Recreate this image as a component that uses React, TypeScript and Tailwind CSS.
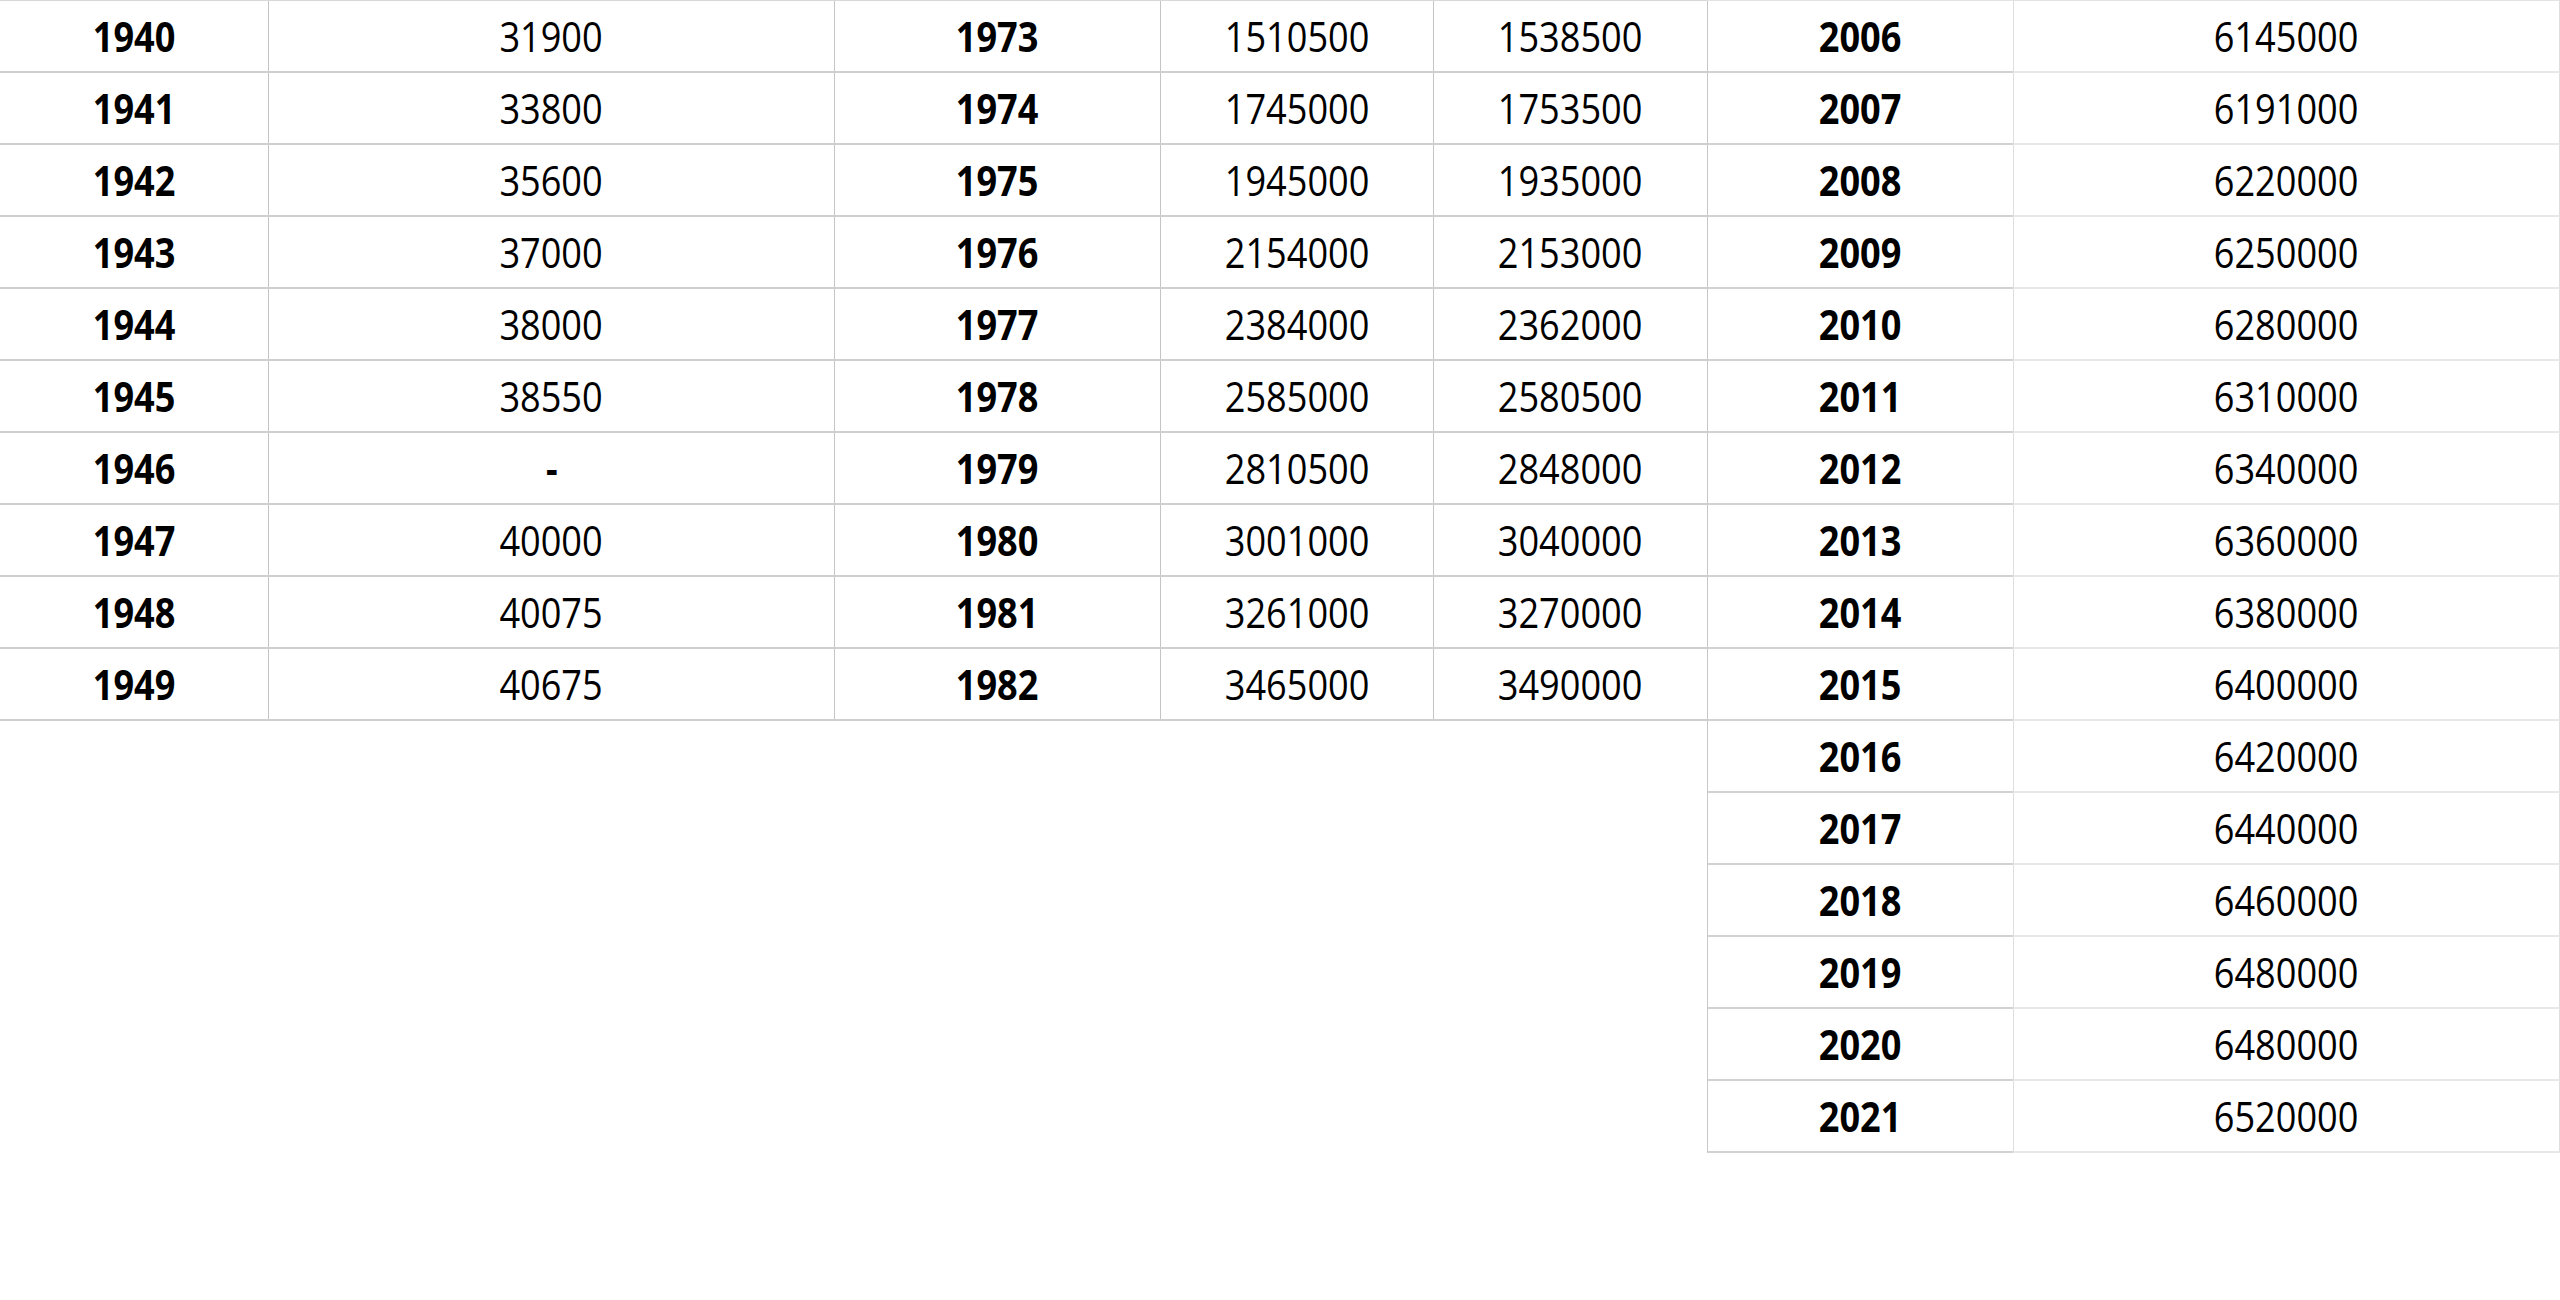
const first: [string, string][] = [
  ["1940", "31900"],
  ["1941", "33800"],
  ["1942", "35600"],
  ["1943", "37000"],
  ["1944", "38000"],
  ["1945", "38550"],
  ["1946", "-"],
  ["1947", "40000"],
  ["1948", "40075"],
  ["1949", "40675"],
];

const second: [string, string, string][] = [
  ["1973", "1510500", "1538500"],
  ["1974", "1745000", "1753500"],
  ["1975", "1945000", "1935000"],
  ["1976", "2154000", "2153000"],
  ["1977", "2384000", "2362000"],
  ["1978", "2585000", "2580500"],
  ["1979", "2810500", "2848000"],
  ["1980", "3001000", "3040000"],
  ["1981", "3261000", "3270000"],
  ["1982", "3465000", "3490000"],
];

const third: [string, string][] = [
  ["2006", "6145000"],
  ["2007", "6191000"],
  ["2008", "6220000"],
  ["2009", "6250000"],
  ["2010", "6280000"],
  ["2011", "6310000"],
  ["2012", "6340000"],
  ["2013", "6360000"],
  ["2014", "6380000"],
  ["2015", "6400000"],
  ["2016", "6420000"],
  ["2017", "6440000"],
  ["2018", "6460000"],
  ["2019", "6480000"],
  ["2020", "6480000"],
  ["2021", "6520000"],
];

// text is a bit narrower than Open Sans, so squeeze it slightly
const Txt = ({ children, bold }: { children: string; bold?: boolean }) => (
  <span className={`inline-block scale-x-[0.86] ${bold ? "font-bold" : "font-normal"}`}>{children}</span>
);

export default function App() {
  return (
    <div className="flex items-start w-[2560px] min-h-[1300px] bg-white text-black text-[42px] leading-[70px] font-['Open_Sans',sans-serif]">
      {/* table 1 */}
      <div className="w-[834px] border-t border-[#d8d8d8]">
        {first.map(([year, value]) => (
          <div key={year} className="flex h-[72px] border-b-2 border-[#cfcfcf]">
            <div className="w-[268px] flex items-center justify-center">
              <Txt bold>{year}</Txt>
            </div>
            <div className="flex-1 flex items-center justify-center border-l border-[#c4c4c4]">
              <Txt bold={value === "-"}>{value}</Txt>
            </div>
          </div>
        ))}
      </div>

      {/* table 2 */}
      <div className="w-[873px] border-t border-[#d8d8d8]">
        {second.map(([year, a, b]) => (
          <div key={year} className="flex h-[72px] border-b-2 border-[#cfcfcf]">
            <div className="w-[326px] flex items-center justify-center border-l border-[#c4c4c4]">
              <Txt bold>{year}</Txt>
            </div>
            <div className="w-[273px] flex items-center justify-center border-l border-[#c4c4c4]">
              <Txt>{a}</Txt>
            </div>
            <div className="flex-1 flex items-center justify-center border-l border-[#c4c4c4]">
              <Txt>{b}</Txt>
            </div>
          </div>
        ))}
      </div>

      {/* table 3 */}
      <div className="flex-1 border-t border-[#e3e3e3]">
        {third.map(([year, value]) => (
          <div key={year} className="flex h-[72px]">
            <div className="w-[306px] flex items-center justify-center border-l border-b-2 border-[#c8c8c8] border-b-[#d2d2d2]">
              <Txt bold>{year}</Txt>
            </div>
            <div className="flex-1 flex items-center justify-center border-l border-r border-b-2 border-[#dedede] border-b-[#e8e8e8]">
              <Txt>{value}</Txt>
            </div>
          </div>
        ))}
      </div>
    </div>
  );
}
